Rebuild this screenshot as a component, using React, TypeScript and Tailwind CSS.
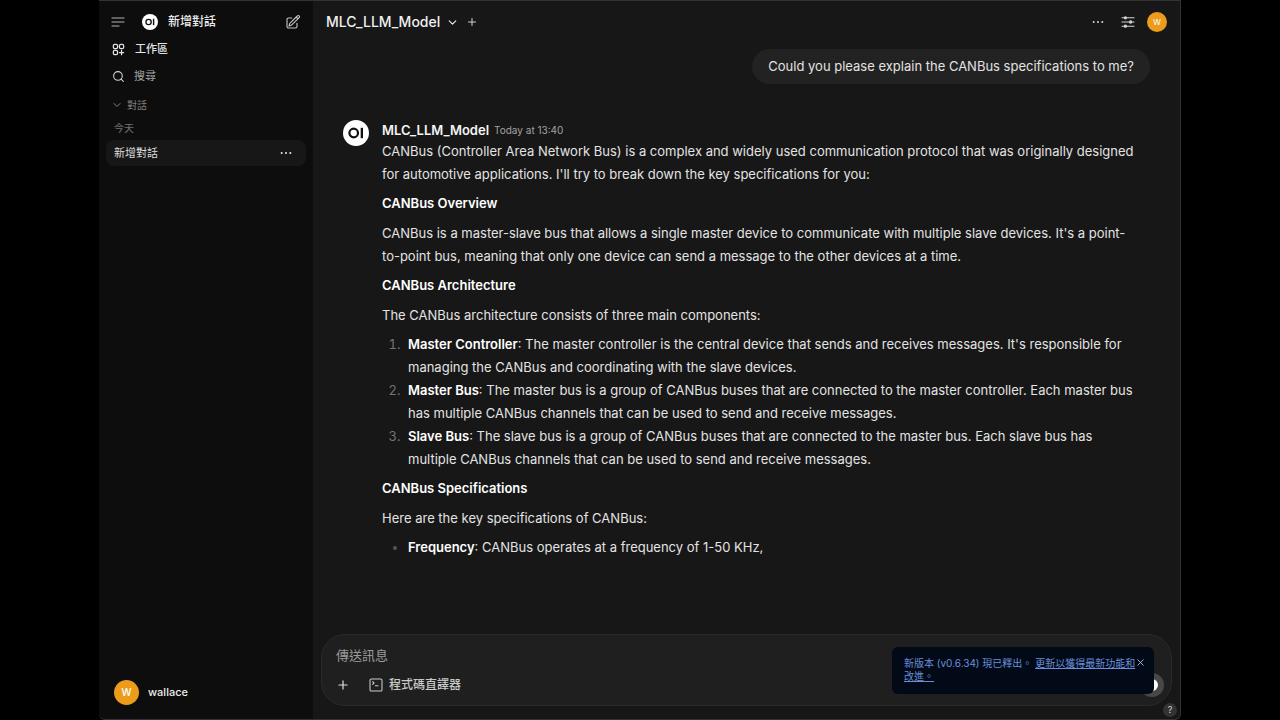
import React from "react";
import { ChevronDown, Plus, Search, SquareTerminal, X } from "lucide-react";

interface ListEntry {
  term: string;
  text: string;
}

const components: ListEntry[] = [
  {
    term: "Master Controller",
    text: "The master controller is the central device that sends and receives messages. It's responsible for managing the CANBus and coordinating with the slave devices.",
  },
  {
    term: "Master Bus",
    text: "The master bus is a group of CANBus buses that are connected to the master controller. Each master bus has multiple CANBus channels that can be used to send and receive messages.",
  },
  {
    term: "Slave Bus",
    text: "The slave bus is a group of CANBus buses that are connected to the master bus. Each slave bus has multiple CANBus channels that can be used to send and receive messages.",
  },
];

function Logo({ className }: { className: string }) {
  return (
    <svg className={className} viewBox="0 0 26 26" aria-hidden="true">
      <circle cx="13" cy="13" r="13" fill="#fff" />
      <circle cx="10.7" cy="13" r="4.3" fill="none" stroke="#111" strokeWidth="2.2" />
      <rect x="17.7" y="7.8" width="2.3" height="10.4" fill="#111" />
    </svg>
  );
}

function Dots({ className }: { className: string }) {
  return (
    <svg className={className} viewBox="0 0 12 12" fill="currentColor" aria-hidden="true">
      <circle cx="1.7" cy="6" r="1" />
      <circle cx="6" cy="6" r="1" />
      <circle cx="10.3" cy="6" r="1" />
    </svg>
  );
}

function Sidebar() {
  return (
    <aside className="flex w-[214px] shrink-0 flex-col bg-[#0d0d0d] px-[7px] pt-2">
      {/* Logo and new chat */}
      <div className="flex h-[26px] items-center pr-[5px] pl-[5px]">
        <button aria-label="Toggle sidebar" className="text-[#b4b4b4]">
          <svg className="h-[14px] w-[14px]" viewBox="0 0 14 14" fill="none" stroke="currentColor" strokeWidth="1.2" strokeLinecap="round">
            <path d="M1 3h12M1 7h12M1 11h7" />
          </svg>
        </button>
        <a href="#new" className="ml-[17px] flex flex-1 items-center gap-[10px] text-xs font-medium text-[#ececec]">
          <Logo className="h-4 w-4" />
          新增對話
        </a>
        <button aria-label="New chat" className="text-[#c4c4c4]">
          <svg className="h-4 w-4" viewBox="0 0 24 24" fill="none" stroke="currentColor" strokeWidth="1.7" strokeLinecap="round" strokeLinejoin="round">
            <path d="m16.862 4.487 1.687-1.688a1.875 1.875 0 1 1 2.652 2.652L10.582 16.07a4.5 4.5 0 0 1-1.897 1.13L6 18l.8-2.685a4.5 4.5 0 0 1 1.13-1.897l8.932-8.931Zm0 0L19.5 7.125M18 14v4.75A2.25 2.25 0 0 1 15.75 21H5.25A2.25 2.25 0 0 1 3 18.75V8.25A2.25 2.25 0 0 1 5.25 6H10" />
          </svg>
        </button>
      </div>

      <nav className="flex flex-col text-[11px]">
        <a href="#workspace" className="flex h-7 items-center gap-[9px] pl-[5px] font-medium text-[#e3e3e3]">
          <svg className="h-[15px] w-[15px]" viewBox="0 0 24 24" fill="none" stroke="currentColor" strokeWidth="2" strokeLinecap="round" strokeLinejoin="round">
            <path d="M13.5 16.875h3.375m0 0h3.375m-3.375 0V13.5m0 3.375v3.375M6 10.5h2.25a2.25 2.25 0 0 0 2.25-2.25V6a2.25 2.25 0 0 0-2.25-2.25H6A2.25 2.25 0 0 0 3.75 6v2.25A2.25 2.25 0 0 0 6 10.5Zm0 9.75h2.25A2.25 2.25 0 0 0 10.5 18v-2.25a2.25 2.25 0 0 0-2.25-2.25H6a2.25 2.25 0 0 0-2.25 2.25V18A2.25 2.25 0 0 0 6 20.25Zm9.75-9.75H18a2.25 2.25 0 0 0 2.25-2.25V6A2.25 2.25 0 0 0 18 3.75h-2.25A2.25 2.25 0 0 0 13.5 6v2.25a2.25 2.25 0 0 0 2.25 2.25Z" />
          </svg>
          工作區
        </a>
        <a href="#search" className="flex h-[26px] items-center gap-[9px] pl-[6px] text-[#a3a3a3]">
          <Search className="h-[13px] w-[13px] text-[#d4d4d4]" strokeWidth={2} />
          搜尋
        </a>
      </nav>

      {/* Chat history */}
      <button className="mt-1 flex h-6 items-center gap-1 pl-[5px] text-[10px] text-[#808080]">
        <ChevronDown className="h-3 w-3" />
        對話
      </button>
      <h2 className="h-[23px] pl-2 text-[10px] leading-[22px] text-[#737373]">今天</h2>
      <div className="flex h-[26px] items-center justify-between rounded-lg bg-[#171717] pr-[14px] pl-2">
        <a href="#chat" className="text-[11px] text-[#dcdcdc]">新增對話</a>
        <button aria-label="Chat menu" className="text-[#ececec]">
          <Dots className="h-3 w-3" />
        </button>
      </div>

      <button className="mt-auto mb-[14px] flex items-center gap-[9px] pl-2 text-[11px] font-medium text-[#ececec]">
        <span className="flex h-[25px] w-[25px] items-center justify-center rounded-full bg-[#eb9c1b] text-[10px] text-white">
          W
        </span>
        wallace
      </button>
    </aside>
  );
}

function Topbar() {
  return (
    <header className="flex h-[42px] shrink-0 items-center px-[13px] text-[#d4d4d4]">
      <button className="flex items-center gap-[6px] text-sm font-medium text-[#f0f0f0]">
        MLC_LLM_Model
        <ChevronDown className="h-[13px] w-[13px]" />
      </button>
      <button aria-label="Add model" className="ml-[7px]">
        <Plus className="h-3 w-3" />
      </button>
      <div className="ml-auto flex items-center">
        <button aria-label="More">
          <Dots className="h-3 w-3" />
        </button>
        <button aria-label="Controls" className="ml-[17px]">
          <svg className="h-[14px] w-[14px]" viewBox="0 0 14 14" fill="none" stroke="currentColor" strokeWidth="1.1" strokeLinecap="round">
            <path d="M1 2.8h2.2M5.6 2.8H13M1 7h7.4M10.8 7H13M1 11.2h2.2M5.6 11.2H13" />
            <circle cx="4.4" cy="2.8" r="1.1" fill="currentColor" />
            <circle cx="9.6" cy="7" r="1.1" fill="currentColor" />
            <circle cx="4.4" cy="11.2" r="1.1" fill="currentColor" />
          </svg>
        </button>
        <button className="ml-3 flex h-5 w-5 items-center justify-center rounded-full bg-[#eb9c1b] text-[8px] text-white">
          W
        </button>
      </div>
    </header>
  );
}

function Conversation() {
  return (
    <section className="min-h-0 flex-1 overflow-hidden px-[30px] text-[13px] leading-[23px] text-[#e3e3e3]">
      <div className="mt-[6px] ml-auto w-fit rounded-full bg-[#222222] px-4 py-[6px]">
        Could you please explain the CANBus specifications to me?
      </div>

      <article className="mt-9 flex gap-[13px] pr-[10px]">
        <Logo className="h-[26px] w-[26px] shrink-0" />
        <div className="min-w-0 flex-1">
          <h2 className="flex h-5 items-center gap-[5px] text-[13px] font-semibold text-[#f5f5f5]">
            MLC_LLM_Model
            <time className="text-[10px] font-normal text-[#a3a3a3]">Today at 13:40</time>
          </h2>
          <div className="flex flex-col gap-[6px]">
            <p>
              CANBus (Controller Area Network Bus) is a complex and widely used communication protocol that was originally
              designed for automotive applications. I'll try to break down the key specifications for you:
            </p>
            <h3 className="pb-px font-semibold text-white">CANBus Overview</h3>
            <p>
              CANBus is a master-slave bus that allows a single master device to communicate with multiple slave devices.
              It's a point-to-point bus, meaning that only one device can send a message to the other devices at a time.
            </p>
            <h3 className="pb-px font-semibold text-white">CANBus Architecture</h3>
            <p>The CANBus architecture consists of three main components:</p>
            <ol className="list-decimal pl-[22px] marker:text-[#737373]">
              {components.map((item) => (
                <li key={item.term} className="pl-1">
                  <strong className="font-semibold text-white">{item.term}</strong>: {item.text}
                </li>
              ))}
            </ol>
            <h3 className="pb-px font-semibold text-white">CANBus Specifications</h3>
            <p>Here are the key specifications of CANBus:</p>
            <ul className="list-disc pl-[26px] marker:text-[#555555]">
              <li>
                <strong className="font-semibold text-white">Frequency</strong>: CANBus operates at a frequency of 1-50 KHz,
              </li>
            </ul>
          </div>
        </div>
      </article>
    </section>
  );
}

function Composer() {
  return (
    <form className="mx-2 mb-[13px] flex h-[72px] shrink-0 flex-col rounded-3xl border border-[#2a2a2a] bg-[#1f1f1f] pt-2 pr-[7px] pl-[14px]">
      <input
        aria-label="傳送訊息"
        placeholder="傳送訊息"
        className="h-6 w-full bg-transparent text-[13px] outline-none placeholder:text-[#9b9b9b]"
      />
      <div className="mt-[5px] flex h-[26px] items-center text-[#e3e3e3]">
        <button type="button" aria-label="Add">
          <Plus className="h-[14px] w-[14px]" strokeWidth={2} />
        </button>
        <button type="button" className="ml-[18px] flex items-center gap-[5px] text-xs font-medium text-[#c9c9c9]">
          <SquareTerminal className="h-4 w-4" strokeWidth={1.6} />
          程式碼直譯器
        </button>
        <button type="button" aria-label="Stop" className="ml-auto flex h-6 w-6 items-center justify-center rounded-full bg-[#484848]">
          <span className="h-3 w-3 rounded-full bg-white" />
        </button>
      </div>
    </form>
  );
}

export default function App() {
  return (
    <div className="h-screen bg-black px-[99px] font-['Inter','Noto_Sans_CJK_TC',sans-serif]">
      <div className="relative flex h-full overflow-hidden rounded-b-md border-y border-r border-[#333333] bg-[#171717]">
        <Sidebar />
        <main className="flex min-w-0 flex-1 flex-col">
          <Topbar />
          <Conversation />
          <Composer />
        </main>

        {/* Update notice */}
        <div
          role="status"
          className="absolute right-[26px] bottom-[25px] flex w-[262px] items-start rounded-md bg-[#020a18] pt-[10px] pr-2 pb-[11px] pl-3 text-[10px] leading-[13px] text-[#6a8fd8]"
        >
          <p className="flex-1">
            新版本 (v0.6.34) 現已釋出。{" "}
            <a href="#update" className="underline">更新以獲得最新功能和改進。</a>
          </p>
          <button aria-label="Close" className="-ml-px text-[#a9c0f0]">
            <X className="h-[11px] w-[11px]" />
          </button>
        </div>

        <button className="absolute right-[3px] bottom-[2px] flex h-[14px] w-[14px] items-center justify-center rounded-full bg-[#333333] text-[9px] text-[#d4d4d4]">
          ?
        </button>
      </div>
    </div>
  );
}
